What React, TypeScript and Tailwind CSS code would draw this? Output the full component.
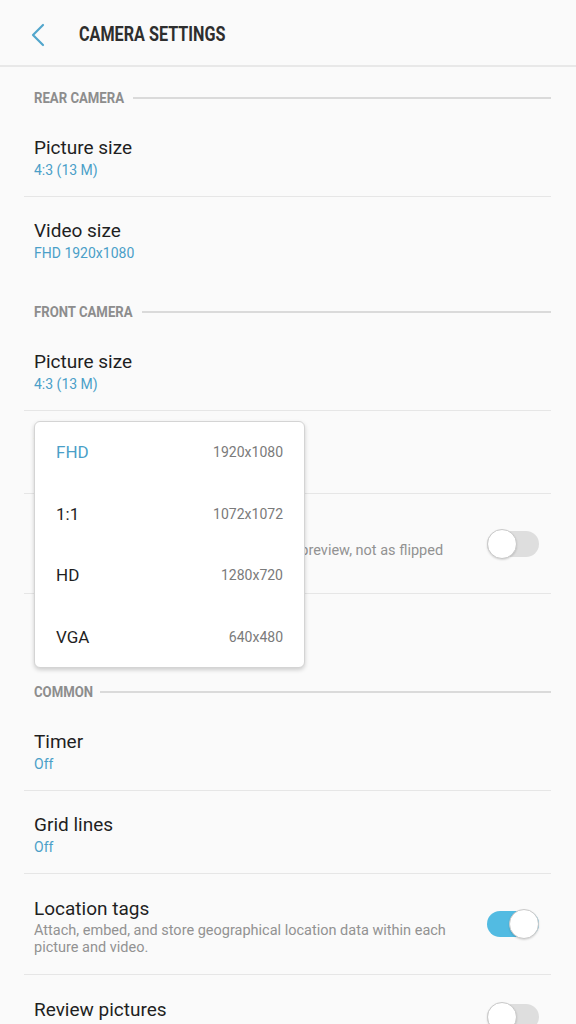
import React from "react";

const font = { fontFamily: "Roboto, 'Noto Sans', sans-serif" };

function Chevron() {
  return (
    <svg width="16" height="24" viewBox="0 0 16 24" fill="none">
      <path d="M13 2 L3 12 L13 22" stroke="#52a6cc" strokeWidth="2.2" strokeLinecap="round" strokeLinejoin="round" />
    </svg>
  );
}

function SectionHeader({ label }: { label: string }) {
  return (
    <div className="h-[48px] pt-[24px] pl-[10px] flex items-start">
      <div className="flex items-center w-full h-[16px] gap-[9px]">
        <span className="text-[14px] leading-[16px] font-bold text-[#8d8d8d] inline-block origin-left scale-x-[0.94] -mr-[6px] whitespace-nowrap">
          {label}
        </span>
        <div className="flex-1 h-[2px] bg-[#dadada]" />
      </div>
    </div>
  );
}

function Row({ title, value, last }: { title: string; value?: string; last?: boolean }) {
  return (
    <div className={`px-[10px] ${value ? "h-[83px]" : "h-[66px]"} pt-[22px] ${last ? "" : "border-b border-[#e6e6e6]"}`}>
      <div className="text-[19px] leading-[24px] text-[#1f1f1f]">{title}</div>
      {value && <div className="text-[14px] leading-[20px] text-[#4a9fc8]">{value}</div>}
    </div>
  );
}

function Toggle({ on }: { on?: boolean }) {
  return (
    <div className={`relative w-[52px] h-[26px] rounded-full ${on ? "bg-[#52bbe2]" : "bg-[#dedede]"}`}>
      <div
        className={`absolute top-[-2px] ${on ? "right-0" : "left-0"} w-[30px] h-[30px] rounded-full bg-white border border-[#c9c9c9] shadow-[0_1px_2px_rgba(0,0,0,0.15)]`}
      />
    </div>
  );
}

function ToggleRow({
  title,
  desc,
  on,
  last,
  height,
}: {
  title: string;
  desc?: React.ReactNode;
  on?: boolean;
  last?: boolean;
  height: string;
}) {
  return (
    <div className={`px-[10px] ${height} flex items-center ${last ? "" : "border-b border-[#e6e6e6]"}`}>
      <div className="flex-1 self-start pt-[23px] pr-[36px]">
        <div className="text-[19px] leading-[24px] text-[#1f1f1f]">{title}</div>
        {desc && <div className="mt-[1px] text-[14.5px] leading-[17px] text-[#929292]">{desc}</div>}
      </div>
      <div className="pr-[2px]">
        <Toggle on={on} />
      </div>
    </div>
  );
}

const sizes = [
  { label: "FHD", res: "1920x1080", active: true },
  { label: "1:1", res: "1072x1072" },
  { label: "HD", res: "1280x720" },
  { label: "VGA", res: "640x480" },
];

export default function App() {
  return (
    <div className="relative w-[576px] h-[1024px] overflow-hidden bg-[#fafafa]" style={font}>
      {/* top bar */}
      <div className="h-[67px] flex items-center border-b-2 border-[#e8e8e8] pl-[30px] pt-[4px]">
        <Chevron />
        <span className="ml-[33px] text-[21px] font-bold text-[#2e2e2e] inline-block origin-left scale-x-[0.77] whitespace-nowrap">
          CAMERA SETTINGS
        </span>
      </div>

      <div className="ml-[24px] mr-[25px] -mt-[1px]">
        <SectionHeader label="REAR CAMERA" />
        <Row title="Picture size" value="4:3 (13 M)" />
        <Row title="Video size" value="FHD 1920x1080" last />

        <SectionHeader label="FRONT CAMERA" />
        <Row title="Picture size" value="4:3 (13 M)" />
        <Row title="Video size" value="FHD 1920x1080" />
        <ToggleRow
          height="h-[100px]"
          title="Save pictures as previewed"
          desc={
            <>
              <span className="whitespace-nowrap">Save selfies exactly as they appear in the  preview, not as flipped</span>
              <br />
              images.
            </>
          }
        />
        <Row title="Gesture control" last />

        <SectionHeader label="COMMON" />
        <Row title="Timer" value="Off" />
        <Row title="Grid lines" value="Off" />
        <ToggleRow
          height="h-[101px]"
          title="Location tags"
          desc="Attach, embed, and store geographical location data within each picture and video."
          on
        />
        <ToggleRow height="h-[83px]" title="Review pictures" last />
      </div>

      {/* video size picker */}
      <div className="absolute left-[34px] top-[421px] w-[271px] h-[247px] rounded-[6px] bg-white border border-[#d4d4d4] shadow-[0_2px_4px_rgba(0,0,0,0.18)] overflow-hidden">
        {sizes.map((s) => (
          <div key={s.label} className="h-[61.5px] flex items-center justify-between pl-[21px] pr-[21px]">
            <span className={`text-[17px] ${s.active ? "text-[#4a9fc8]" : "text-[#1f1f1f]"}`}>{s.label}</span>
            <span className="text-[14px] text-[#7a7a7a]">{s.res}</span>
          </div>
        ))}
      </div>
    </div>
  );
}
